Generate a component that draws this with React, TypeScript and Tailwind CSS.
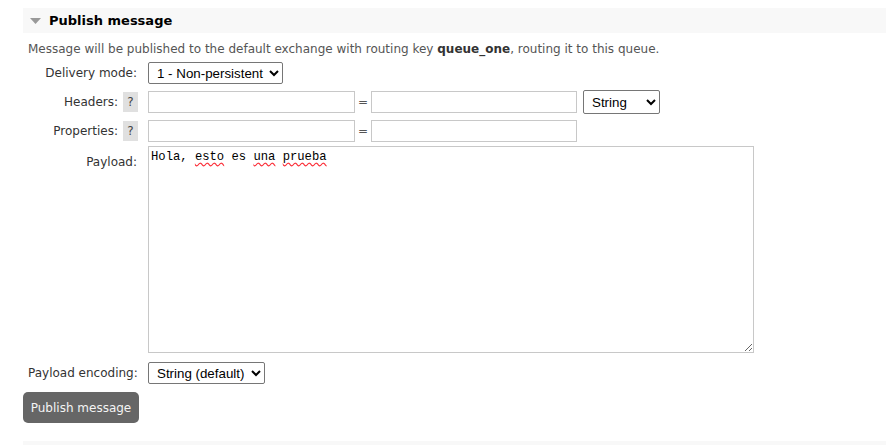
import { useState } from "react";

const HelpTag = () => (
  <span className="ml-[5px] inline-flex h-[20px] w-[15px] items-center justify-center bg-[#e0e0e0] text-[12px] text-[#444]">
    ?
  </span>
);

export default function App() {
  const [payload, setPayload] = useState("Hola, esto es una prueba");

  const inputCls =
    "h-[22px] border border-[#c8c8c8] bg-white px-1 text-[13px] font-['Liberation_Sans',sans-serif] outline-none";
  const selectCls =
    "h-[22px] rounded-[2px] border border-[#767676] bg-white pl-[4px] text-[13.33px] text-black font-['Liberation_Sans',Arial,sans-serif] outline-none";

  return (
    <div className="h-[445px] w-[886px] overflow-hidden bg-white font-['DejaVu_Sans',Verdana,sans-serif] text-[12px] text-[#333]">
      <div className="pl-[23px] pt-[8px]">
        <div className="flex h-[25px] items-center bg-[#f8f8f8] pl-[7px]">
          <svg width="11" height="6" viewBox="0 0 11 6" className="mt-[1px]">
            <polygon points="0,0 11,0 5.5,6" fill="#999" />
          </svg>
          <span className="ml-[8px] text-[13px] font-bold text-black">Publish message</span>
        </div>

        <div className="pl-[5px]">
          <p className="mt-[9px] leading-[15px] text-[#555]">
            Message will be published to the default exchange with routing key{" "}
            <b className="text-[#333]">queue_one</b>, routing it to this queue.
          </p>

          <div className="mt-[5px] flex items-center">
            <label className="w-[120px] shrink-0 whitespace-nowrap pr-[11px] text-right">Delivery mode:</label>
            <select className={`${selectCls} w-[135px]`} defaultValue="1">
              <option value="1">1 - Non-persistent</option>
              <option value="2">2 - Persistent</option>
            </select>
          </div>

          <div className="mt-[6px] flex items-center">
            <div className="flex w-[120px] shrink-0 items-center justify-end pr-[10px]">
              <span>Headers:</span>
              <HelpTag />
            </div>
            <input className={`${inputCls} w-[207px]`} />
            <span className="w-[16px] text-center text-[#555]">=</span>
            <input className={`${inputCls} w-[206px]`} />
            <select className={`${selectCls} ml-[6px] h-[24px] w-[77px]`} defaultValue="string">
              <option value="string">String</option>
              <option value="number">Number</option>
              <option value="boolean">Boolean</option>
            </select>
          </div>

          <div className="mt-[6px] flex items-center">
            <div className="flex w-[120px] shrink-0 items-center justify-end pr-[10px]">
              <span>Properties:</span>
              <HelpTag />
            </div>
            <input className={`${inputCls} w-[207px]`} />
            <span className="w-[16px] text-center text-[#555]">=</span>
            <input className={`${inputCls} w-[206px]`} />
          </div>

          <div className="mt-[4px] flex items-start">
            <label className="w-[120px] shrink-0 pr-[11px] pt-[7px] text-right">Payload:</label>
            <div className="relative">
              <textarea
                className="block h-[207px] w-[606px] border border-[#c8c8c8] bg-white px-[2px] py-[3px] font-['Liberation_Mono',monospace] text-[12.2px] leading-[15px] text-black outline-none"
                value={payload}
                onChange={(e) => setPayload(e.target.value)}
              />
              {payload === "Hola, esto es una prueba" && (
                <div className="pointer-events-none absolute left-[1px] top-[1px] whitespace-pre px-[2px] py-[3px] font-['Liberation_Mono',monospace] text-[12.2px] leading-[15px] text-transparent">
                  {"Hola, "}
                  <span className="underline decoration-red-500 decoration-wavy underline-offset-2">esto</span>
                  {" es "}
                  <span className="underline decoration-red-500 decoration-wavy underline-offset-2">una</span>{" "}
                  <span className="underline decoration-red-500 decoration-wavy underline-offset-2">prueba</span>
                </div>
              )}
            </div>
          </div>

          <div className="mt-[9px] flex items-center">
            <label className="w-[120px] shrink-0 whitespace-nowrap pr-[10px] text-left">Payload encoding:</label>
            <select className={`${selectCls} w-[117px]`} defaultValue="string">
              <option value="string">String (default)</option>
              <option value="base64">Base64</option>
            </select>
          </div>
        </div>

        <button className="mt-[8px] h-[31px] w-[116px] rounded-[5px] bg-[#666] text-[12px] text-[#f4f4f4]">
          Publish message
        </button>

        <div className="mt-[18px] h-[10px] bg-[#f8f8f8]" />
      </div>
    </div>
  );
}
